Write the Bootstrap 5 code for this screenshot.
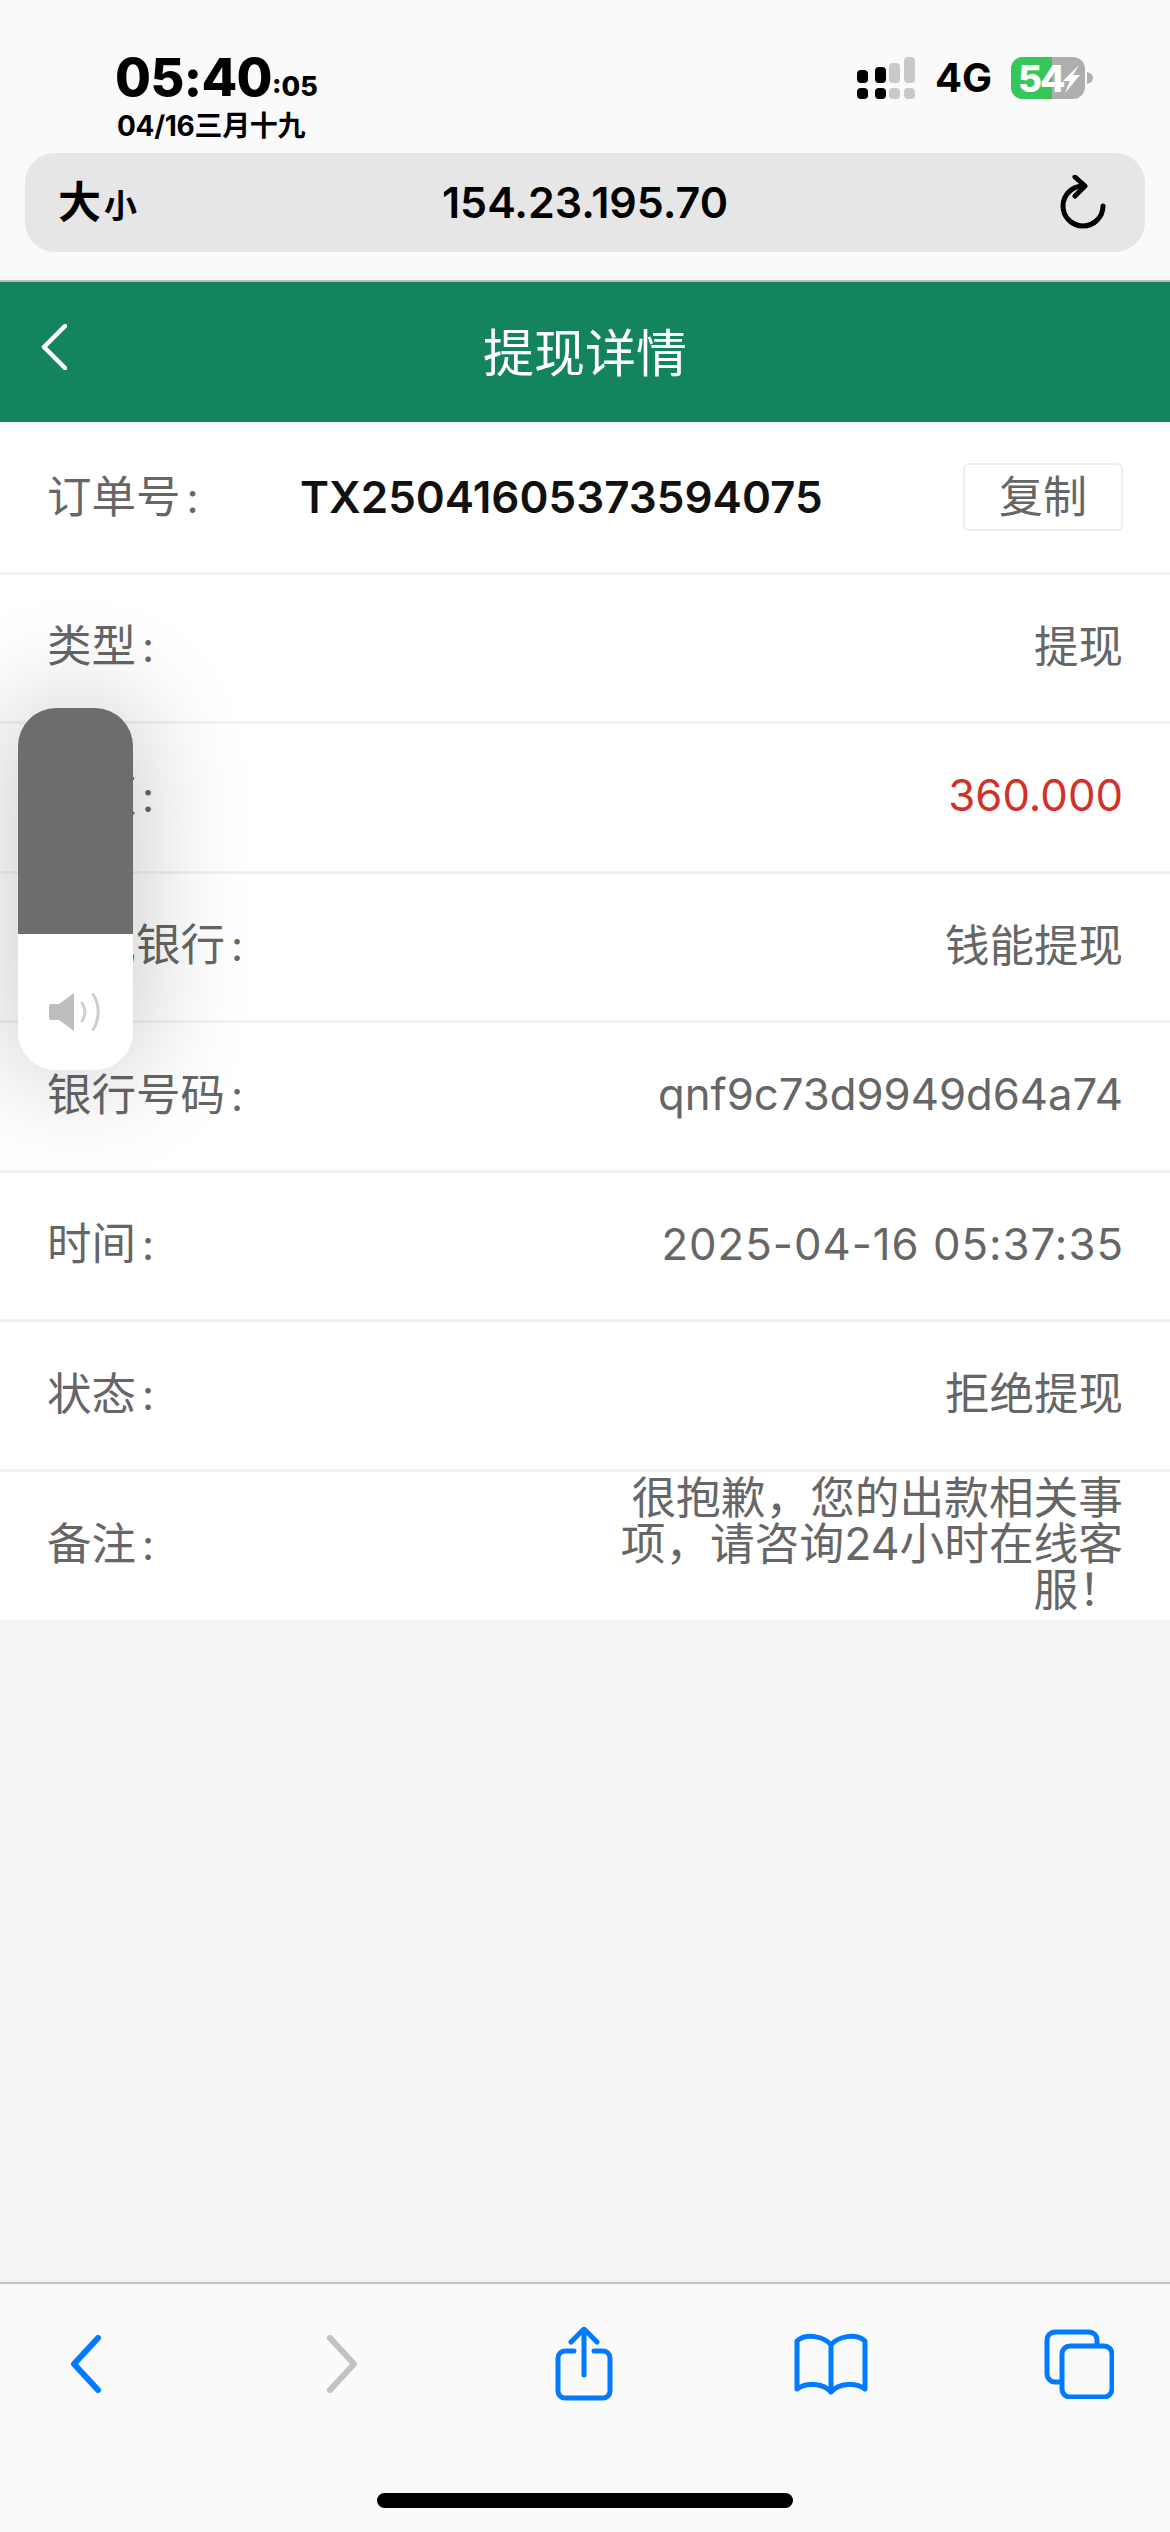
<!DOCTYPE html>
<html lang="zh-CN">
<head>
<meta charset="utf-8">
<title>提现详情</title>
<link rel="stylesheet" href="https://cdn.jsdelivr.net/npm/bootstrap@5.3.0/dist/css/bootstrap.min.css">
<style>
:root{--cjk:"Inter","Noto Sans CJK SC",sans-serif;}
html,body{margin:0;background:#f4f4f4;}
body{font-family:var(--cjk);width:1170px;height:2532px;overflow:hidden;position:relative;color:#666;}
.shell{height:2532px;}
.chrome{height:282px;background:#fafafa;border-bottom:2px solid #bdbdbd;padding:0 25px;}
.statusline{height:153px;padding:59px 0 0 90px;color:#000;}
.clock{font-weight:800;font-size:52px;line-height:38px;letter-spacing:-.6px;white-space:nowrap;}
.clock span{font-size:27px;letter-spacing:0;}
.dateline{font-weight:700;font-size:28px;line-height:26px;margin-top:7px;margin-left:2px;letter-spacing:-.3px;white-space:nowrap;}
.indicators{margin-right:50px;margin-top:-2px;gap:19px;}
.fourg{font-weight:700;font-size:40px;line-height:40px;}
.urlbar{height:99px;background:#e6e6e6;border-radius:30px;padding:0 38px 0 33px;color:#000;position:relative;}
.sizer{font-weight:700;font-size:43px;line-height:1;}
.sizer small{font-size:33px;font-weight:700;margin-left:3px;}
.address{font-weight:600;font-size:43px;position:absolute;left:0;right:0;text-align:center;}
.appbar{height:140px;background:#14835f;color:#fff;padding-left:41px;position:relative;}
.apptitle{position:absolute;left:0;right:0;text-align:center;font-size:51px;line-height:1;top:46px;}
.apprail{margin-top:-10px;}
.sheet{background:#fff;border-top:3px solid #f7f7f7;}
.entry{height:149.5px;border-bottom:3px solid #f2f2f2;padding:0 47px 2px 47px;font-size:44.5px;line-height:46px;white-space:nowrap;}
.entry:last-child{border-bottom:0;height:148px;}
.tick{margin-left:6px;font-size:42px;}
.latin{font-size:43.7px;}
.stamp{letter-spacing:1px;margin-right:-1px;}
.ordno{position:absolute;left:300px;color:#111;font-weight:600;font-size:44px;}
.entry-rel{position:relative;}
.copybtn{border:2px solid #eee;border-radius:6px;padding:0;width:160px;height:68px;font-size:44px;line-height:60px;color:#666;background:#fff;}
.amount{color:#d0322a;}
.remark{width:510px;text-align:right;white-space:normal;margin-top:-2px;font-size:44.7px;}
.filler{background:#f4f4f4;}
.dock{height:250px;background:#fafafa;border-top:2px solid #c4c4c4;position:relative;}
.dockgrid{display:grid;grid-template-columns:172px 340px 144px 350px 146px;height:120px;padding-top:40px;}
.homebar{position:absolute;left:377px;top:209px;width:416px;height:15px;background:#000;border-radius:8px;}
.volume{position:absolute;left:18px;top:708px;width:115px;height:362px;border-radius:38px;background:#fff;overflow:hidden;}
.volume-shade{position:absolute;left:18px;top:708px;width:115px;height:362px;border-radius:38px;box-shadow:0 0 110px 10px rgba(0,0,0,.2);}
.volume-level{height:226px;background:#6d6d6d;}
.volume-icon{margin-top:59px;}
.battery{overflow:visible;}
</style>
</head>
<body>
<div class="shell d-flex flex-column">
  <div class="chrome flex-shrink-0">
    <div class="statusline d-flex justify-content-between align-items-start">
      <div>
        <div class="clock">05:40<span>:05</span></div>
        <div class="dateline">04/16三月十九</div>
      </div>
      <div class="indicators d-flex align-items-center">
        <svg width="60" height="42" viewBox="0 0 60 42">
          <g fill="#000"><rect x="1" y="13" width="11" height="13" rx="4"/><rect x="19" y="10" width="11" height="16" rx="4"/><rect x="1" y="31" width="11" height="11" rx="4"/><rect x="19" y="31" width="11" height="11" rx="4"/></g>
          <g fill="#c9c9c9"><rect x="33" y="6" width="11" height="20" rx="4"/><rect x="48" y="0" width="11" height="26" rx="4"/><rect x="33" y="31" width="11" height="11" rx="4"/><rect x="48" y="31" width="11" height="11" rx="4"/></g>
        </svg>
        <span class="fourg">4G</span>
        <svg class="battery" width="84" height="42" viewBox="0 0 84 42">
          <defs><clipPath id="batt"><rect x="0" y="0" width="74" height="42" rx="12"/></clipPath></defs>
          <g clip-path="url(#batt)"><rect width="74" height="42" fill="#aeaeae"/><rect width="41" height="42" fill="#35c759"/></g>
          <path d="M76 15c4 1 6 3 6 6s-2 5-6 6z" fill="#aeaeae"/>
          <text x="7" y="35" font-family="Inter,sans-serif" font-weight="800" font-size="37" fill="#fff" letter-spacing="-2">54</text>
          <path d="M68 8 52 24h7l-5 12 15-18h-7z" fill="#fff"/>
        </svg>
      </div>
    </div>
    <div class="urlbar d-flex align-items-center justify-content-between">
      <div class="sizer">大<small>小</small></div>
      <div class="address">154.23.195.70</div>
      <svg width="48" height="56" viewBox="0 0 48 56" fill="none" stroke="#000" stroke-width="5" stroke-linecap="round" stroke-linejoin="round" class="position-relative">
        <path d="M24 11A20 20 0 1 0 44 31"/><path d="M16 2l10 9-10 10"/>
      </svg>
    </div>
  </div>
  <div class="appbar flex-shrink-0 d-flex align-items-center">
    <svg class="apprail" width="26" height="46" viewBox="0 0 26 46" fill="none" stroke="#fff" stroke-width="4.5" stroke-linecap="round" stroke-linejoin="round"><path d="M24 2 3 23l21 21"/></svg>
    <div class="apptitle">提现详情</div>
  </div>
  <div class="sheet flex-shrink-0">
    <div class="entry entry-rel d-flex align-items-center justify-content-between"><span>订单号<span class="tick">:</span></span><span class="ordno">TX25041605373594075</span><button type="button" class="copybtn btn">复制</button></div>
    <div class="entry d-flex align-items-center justify-content-between"><span>类型<span class="tick">:</span></span><span>提现</span></div>
    <div class="entry d-flex align-items-center justify-content-between"><span>金额<span class="tick">:</span></span><span class="amount latin">360.000</span></div>
    <div class="entry d-flex align-items-center justify-content-between"><span>提现银行<span class="tick">:</span></span><span>钱能提现</span></div>
    <div class="entry d-flex align-items-center justify-content-between"><span>银行号码<span class="tick">:</span></span><span class="latin">qnf9c73d9949d64a74</span></div>
    <div class="entry d-flex align-items-center justify-content-between"><span>时间<span class="tick">:</span></span><span class="latin stamp">2025-04-16 05:37:35</span></div>
    <div class="entry d-flex align-items-center justify-content-between"><span>状态<span class="tick">:</span></span><span>拒绝提现</span></div>
    <div class="entry d-flex align-items-center justify-content-between"><span>备注<span class="tick">:</span></span><span class="remark">很抱歉，您的出款相关事项，请咨询24小时在线客服！</span></div>
  </div>
  <div class="filler flex-grow-1"></div>
  <div class="dock flex-shrink-0">
    <div class="dockgrid">
      <div class="d-flex justify-content-center align-items-center">
        <svg width="32" height="58" viewBox="0 0 32 58" fill="none" stroke="#007aff" stroke-width="6" stroke-linecap="round" stroke-linejoin="round"><path d="M28 3 4 29l24 26"/></svg>
      </div>
      <div class="d-flex justify-content-center align-items-center">
        <svg width="32" height="58" viewBox="0 0 32 58" fill="none" stroke="#c2c2c2" stroke-width="6" stroke-linecap="round" stroke-linejoin="round"><path d="M4 3l24 26L4 55"/></svg>
      </div>
      <div class="d-flex justify-content-center align-items-center">
        <svg width="58" height="74" viewBox="0 0 58 74" fill="none" stroke="#007aff" stroke-width="5" stroke-linecap="round" stroke-linejoin="round"><path d="M19 24H10a7 7 0 0 0-7 7v33a7 7 0 0 0 7 7h38a7 7 0 0 0 7-7V31a7 7 0 0 0-7-7h-9"/><path d="M29 48V3M16 15 29 2l13 13"/></svg>
      </div>
      <div class="d-flex justify-content-center align-items-center">
        <svg width="74" height="62" viewBox="0 0 74 62" fill="none" stroke="#007aff" stroke-width="5" stroke-linecap="round" stroke-linejoin="round"><path d="M37 12C30 3 12 0 3 8v48c9-7 26-6 34 3 8-9 25-10 34-3V8C62 0 44 3 37 12zM37 12v47"/></svg>
      </div>
      <div class="d-flex justify-content-center align-items-center">
        <svg width="70" height="70" viewBox="0 0 70 70" fill="none" stroke="#007aff" stroke-width="5" stroke-linejoin="round"><rect x="3" y="3" width="50" height="50" rx="8"/><rect x="18" y="17" width="50" height="51" rx="8" fill="#fafafa"/></svg>
      </div>
    </div>
    <div class="homebar"></div>
  </div>
</div>
<div class="volume-shade"></div>
<div class="volume">
  <div class="volume-level"></div>
  <div class="volume-icon d-flex justify-content-center">
    <svg width="54" height="38" viewBox="0 0 54 38">
      <path d="M2 11h8L25 0v38L10 27H2a2 2 0 0 1-2-2V13a2 2 0 0 1 2-2z" fill="#bdbdbd"/>
      <path d="M33 10c4 6 4 12 0 18M44 1c7 11 7 25 0 36" fill="none" stroke="#cfcfcf" stroke-width="3" stroke-linecap="round"/>
    </svg>
  </div>
</div>
</body>
</html>
